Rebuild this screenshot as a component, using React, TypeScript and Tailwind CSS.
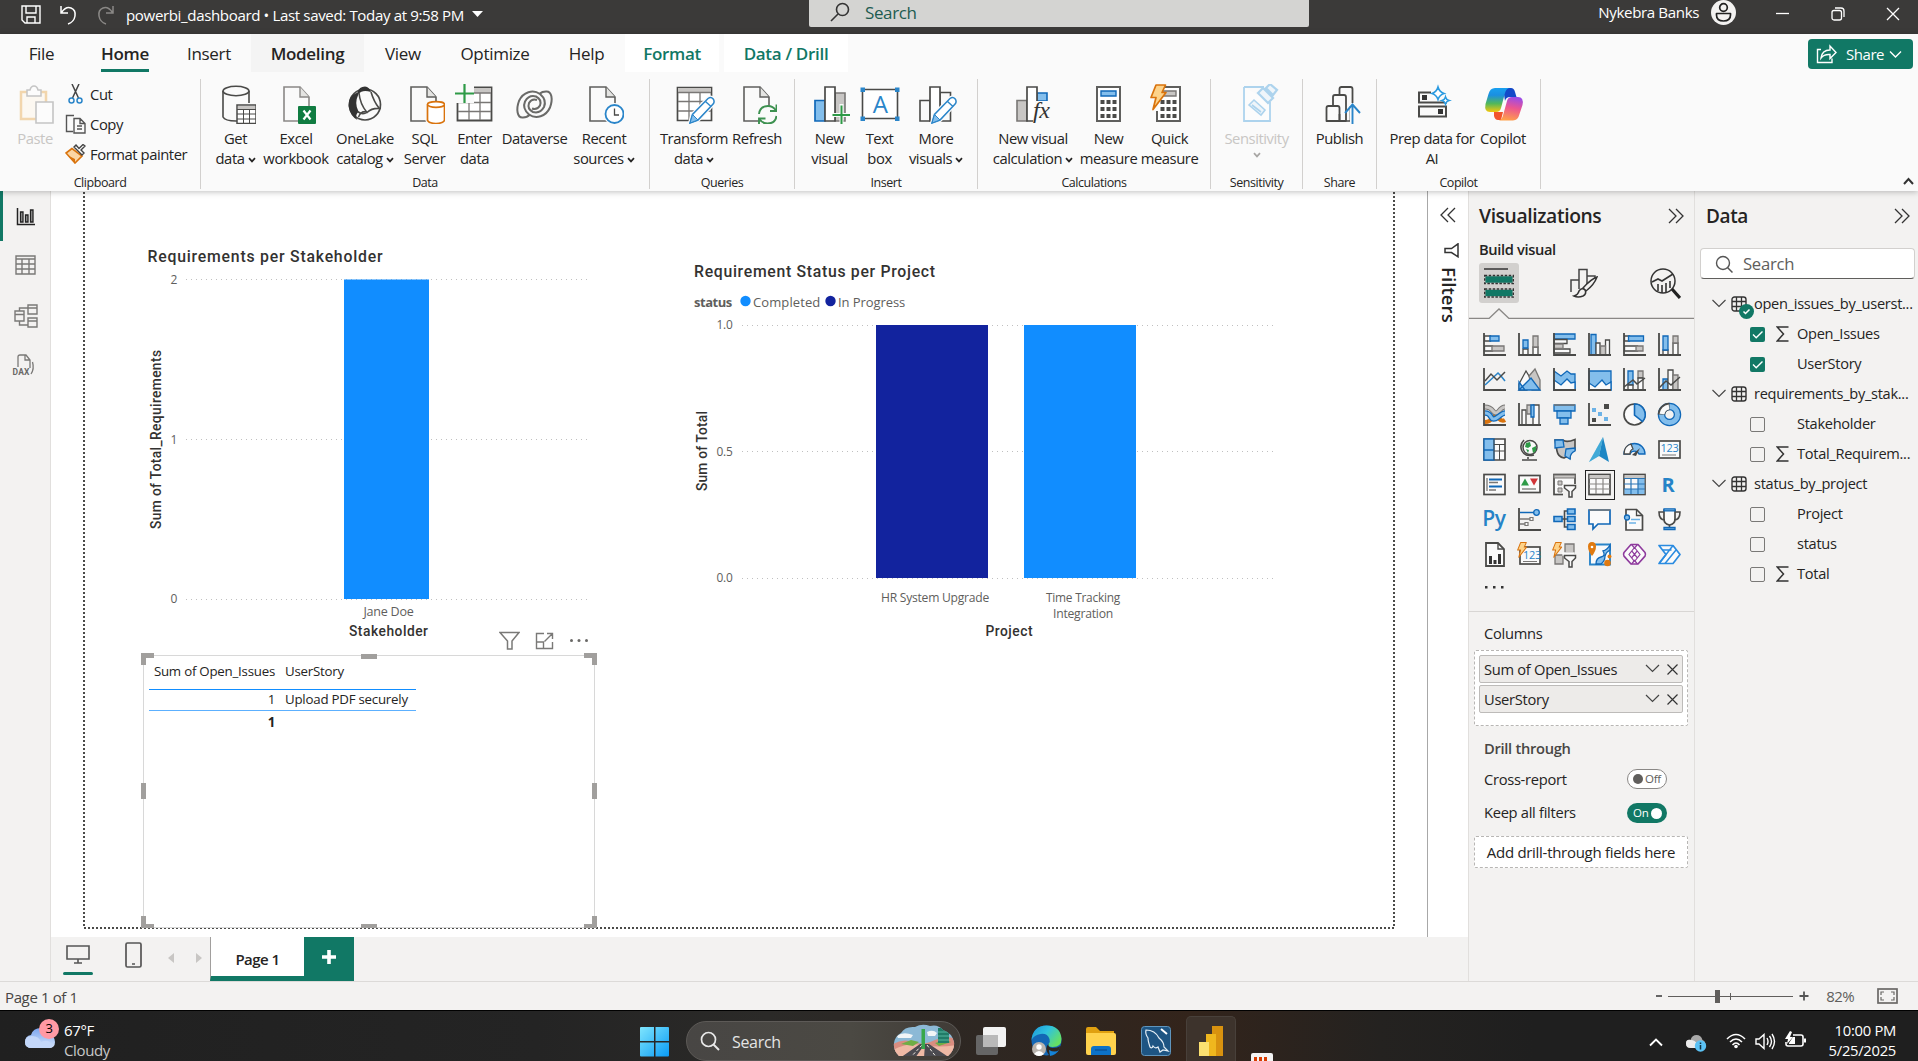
import React from 'react';

const D = '#4a4a48';
const B = '#1068b8';
const BF = '#83beec';
const G = '#797775';
const GF = '#c8c6c4';
const W = '#fafafa';

type IconProps = { children: React.ReactNode; w?: number; h?: number; className?: string };

function Svg({ children, w = 23, h = 23, className = '' }: IconProps) {
  return (
    <svg width={w} height={h} viewBox={`0 0 ${w} ${h}`} fill="none" className={`block shrink-0 ${className}`}>
      {children}
    </svg>
  );
}

const Chevron = ({ className = '' }: { className?: string }) => (
  <svg width="8" height="6" viewBox="0 0 8 6" fill="none" className={`inline-block ${className}`}>
    <path d="M1 1.2 4 4.4 7 1.2" stroke="currentColor" strokeWidth="1.7" />
  </svg>
);

/* ---------- ribbon icons (40 x 40) ---------- */

const Doc = ({ x = 6, c = '#5f5f5d' }: { x?: number; c?: string }) => (
  <g transform={`translate(${x} 0)`}>
    <path d="M1 3h16l9 10v24H1z" fill={W} stroke={c} strokeWidth="1.6" />
    <path d="M17 3v10h9" stroke={c} strokeWidth="1.4" fill="#e4e4e2" />
  </g>
);

const Pencil = ({ x, y }: { x: number; y: number }) => (
  <g transform={`translate(${x} ${y})`}>
    <path d="M1 26l2.500-8.500L19 1.500q3-2 5 .3t.3 5L9 23z" fill="#fff" stroke={W} strokeWidth="4" />
    <path d="M1 26l2.500-8.500L19 1.500q3-2 5 .3t.3 5L9 23z" fill="#fff" stroke="#2a85c9" strokeWidth="1.5" />
    <path d="M1 26l2.500-8.500L9 23z" fill={BF} stroke="#2a85c9" />
    <path d="M16.500 4.500l5.500 5" stroke="#2a85c9" strokeWidth="1.4" />
  </g>
);

const PasteI = () => (
  <Svg w={40} h={40} className="opacity-40">
    <path d="M6 8h25v27H6z" fill="#fff6e4" stroke="#e8a33d" strokeWidth="2.500" />
    <path d="M12 12V6h3q1-4 4-4t4 4h3v6z" fill="#fff" stroke="#777" strokeWidth="1.500" />
    <path d="M21 18h17v21H21z" fill="#fff" stroke="#777" strokeWidth="1.600" />
  </Svg>
);
const GetDataI = () => (
  <Svg w={40} h={40}>
    <path d="M7 7v26q2 4 13 4h2M33 7v12" stroke={D} strokeWidth="1.6" />
    <ellipse cx="20" cy="7" rx="13" ry="4.700" fill={W} stroke={D} strokeWidth="1.6" />
    <path d="M21 21h19v18.500H21z" fill="#fff" stroke={D} strokeWidth="1.5" />
    <path d="M22 22h17v3H22z" fill={GF} />
    <path d="M21 25.500h19M21 30h19M21 35h19M27.500 25v14M33.500 25v14" stroke={D} />
  </Svg>
);
const ExcelI = () => (
  <Svg w={40} h={40}>
    <Doc x={7} c="#8a8886" />
    <rect x="22" y="22" width="18" height="18" rx="1" fill="#107c41" />
    <path d="M27.500 26.500l7 9M34.500 26.500l-7 9" stroke="#fff" strokeWidth="2.200" />
  </Svg>
);
const OneLakeI = () => (
  <Svg w={40} h={40}>
    <circle cx="20" cy="20.500" r="15.500" stroke={D} strokeWidth="1.7" fill={W} />
    <path d="M20 2.500q-6 0-7.500 6Q3 12 3.500 22q1.500 10 9 14-3-4 1-8.500-4.500-8 0-17.500 4-5 12.500-2-1.500-5-6-5.500z" fill="#333" />
    <path d="M14 9q1 11 8 19.500 5-5 14-4M22 28q-4 3.500-9.500-.5M13.500 33q3-7 9-5M26 8q3 10 8 16" stroke={D} strokeWidth="1.6" />
  </Svg>
);
const SqlI = () => (
  <Svg w={40} h={40}>
    <Doc x={5} />
    <path d="M22.500 20.500v16q2 3 8.500 3t8.500-3v-16z" fill="#fff" stroke={W} strokeWidth="4" />
    <path d="M22.500 20.500v16q2 3 8.500 3t8.500-3v-16" fill="#fff" stroke="#d9730d" strokeWidth="1.700" />
    <ellipse cx="31" cy="20.500" rx="8.500" ry="2.800" fill="#fff" stroke="#d9730d" strokeWidth="1.700" />
  </Svg>
);
const EnterI = () => (
  <Svg w={40} h={40}>
    <path d="M2.500 3.500h34v33h-34z" fill="#fff" stroke={D} strokeWidth="1.8" />
    <path d="M14 4h22v5H14z" fill={GF} />
    <path d="M3 18.500h33M3 27.500h33M14 9v27M25 9v27M14 9h22" stroke={G} strokeWidth="1.300" />
    <path d="M0 0h19v19H0z" fill={W} />
    <path d="M9.500 0v19M0 9.500h19" stroke="#2e9a47" strokeWidth="2.200" />
  </Svg>
);
const DataverseI = () => (
  <Svg w={40} h={40}>
    <path d="M8 33.500C2 34 1 25 4 17 8 8 18 5 25 10q7 6 4 13-4 7-11 5-6-3-4-9 3-5 8-3" stroke="#6a6a68" strokeWidth="2" />
    <path d="M31 7.500c6-.5 7 8 4 16-4 9-14 12-21 7q-7-6-4-13 4-7 11-5 6 3 4 9-3 5-8 3" stroke="#6a6a68" strokeWidth="2" />
    <path d="M8 33.500q4 0 7-3M31 7.500q-4 0-6 2" stroke="#6a6a68" strokeWidth="2" />
  </Svg>
);
const RecentI = () => (
  <Svg w={40} h={40}>
    <Doc x={5} />
    <circle cx="30.500" cy="30" r="9" fill="#fff" stroke={W} strokeWidth="4" />
    <circle cx="30.500" cy="30" r="9" fill="#fff" stroke="#2a85c9" strokeWidth="1.800" />
    <path d="M30.500 24.500V31H35" stroke={D} strokeWidth="1.300" />
  </Svg>
);
const TransformI = () => (
  <Svg w={42} h={40}>
    <path d="M3.500 3.500h34v33h-34z" fill="#fff" stroke={D} strokeWidth="1.7" />
    <path d="M4 4h33v4H4z" fill={GF} />
    <path d="M4 8.500h33M4 17.500h33M4 27h33M15 9v27M26 9v27" stroke={G} strokeWidth="1.300" />
    <Pencil x={15} y={13} />
  </Svg>
);
const RefreshI = () => (
  <Svg w={40} h={40}>
    <Doc x={6} />
    <circle cx="30.500" cy="31" r="9.500" fill={W} />
    <path d="M22 30q1-8 9-8 5 0 8 4.500M39.500 32q-1 7.500-9 7.500-5 0-8-4.500" stroke="#3d9150" strokeWidth="1.900" />
    <path d="M39.500 20.500v6.500H33M22 40.500V34.500h6.500" stroke="#3d9150" strokeWidth="1.900" />
  </Svg>
);
const NewVisualI = () => (
  <Svg w={40} h={40}>
    <path d="M5 16.500h10V37H5z" fill={BF} stroke={B} strokeWidth="1.7" />
    <path d="M25 9h10v28H25z" fill={GF} stroke={G} strokeWidth="1.6" />
    <path d="M15 3h10v34H15z" fill="#fff" stroke={D} strokeWidth="1.7" />
    <path d="M31.500 20v20M22 31h19" stroke={W} strokeWidth="4" />
    <path d="M31.500 21.500V40M22.500 31H41" stroke="#2e9a47" strokeWidth="2" />
  </Svg>
);
const TextBoxI = () => (
  <Svg w={40} h={40}>
    <path d="M2.500 5.500h35v29h-35z" fill="#fff" stroke={D} strokeWidth="1.600" />
    <path d="M.5 3.500h4.500v4.500H.5zM35 3.500h4.500v4.500H35zM.5 32.500h4.500V37H.5zM35 32.500h4.500V37H35z" fill="#2a85c9" />
    <text x="20" y="29" textAnchor="middle" fontSize="24" fill="#2a85c9" className="font-['Open_Sans',sans-serif]">A</text>
  </Svg>
);
const MoreI = () => (
  <Svg w={42} h={40}>
    <path d="M4 16.500h10V37H4zM24 8.500h10.500V37H24z" fill={W} stroke={D} strokeWidth="1.6" />
    <path d="M14 3h10v34H14z" fill="#fff" stroke={D} strokeWidth="1.7" />
    <Pencil x={15} y={13} />
  </Svg>
);
const CalcVisI = () => (
  <Svg w={40} h={40}>
    <path d="M4 16.500h10V37H4z" fill={GF} stroke={G} strokeWidth="1.6" />
    <path d="M24 9h10v8H24z" fill={BF} stroke={B} strokeWidth="1.6" />
    <path d="M14 3h10v34H14z" fill="#fff" stroke={D} strokeWidth="1.7" />
    <path d="M22 17h14v21H20z" fill={W} />
    <text x="20" y="34" fontSize="24" fontStyle="italic" fill="#333" className="font-['Liberation_Serif',serif]">fx</text>
  </Svg>
);
const Calculator = ({ x, screen, sc }: { x: number; screen: string; sc: string }) => (
  <g transform={`translate(${x} 0)`}>
    <path d="M1 3h23v34H1z" fill="#fff" stroke="#5f5f5d" strokeWidth="2" />
    <path d="M5 7h15v5H5z" fill={screen} stroke={sc} strokeWidth="1.4" />
    {[16, 23, 30].map((y) => [4.5, 10.5, 16.5].map((cx) => <rect key={`${cx}-${y}`} x={cx} y={y} width="4" height="4" fill="#4a4a48" />))}
  </g>
);
const Bolt = ({ s = 1 }: { s?: number }) => (
  <path transform={`scale(${s})`} d="M6 1h9.500l-3.500 7.500h4L3 25.500l3-12H1z" fill="#fdd38a" stroke="#d9730d" strokeWidth="1.700" strokeLinejoin="round" />
);
const SensI = () => (
  <Svg w={42} h={40} className="opacity-40">
    <path d="M7 3h20v0M7 3v34h26V18" fill="#fff" stroke="#3b9bdc" strokeWidth="1.800" />
    <path d="M12 21l5-5 11 10-4 5zM15 21l9 7" stroke="#3b9bdc" strokeWidth="1.600" fill="#dff0fb" />
    <path d="M21 9l5-5 10 10-5 5zM29 4l4-4 7 6-4 5z" stroke="#3b9bdc" strokeWidth="2.200" fill="#dff0fb" />
  </Svg>
);
const PublishI = () => (
  <Svg w={42} h={40}>
    <path d="M6.500 37V24q0-2 2-2h9q2 0 2 2v13zM13 21v-8q0-2 2-2h9q2 0 2 2v24M19.500 10V5q0-2 2-2h9q2 0 2 2v14M6.500 37h20" stroke={D} strokeWidth="1.800" strokeLinejoin="round" />
    <path d="M19.500 30v7h11V22" stroke={D} strokeWidth="1.700" />
    <path d="M32.500 40V21" stroke={W} strokeWidth="5" />
    <path d="M32.500 40V21M25 29l7.500-8.500L40 29" stroke="#2a85c9" strokeWidth="1.900" />
  </Svg>
);
const PrepI = () => (
  <Svg w={42} h={40}>
    <path d="M19 8.500H7v10h27v-1M7 22.500h27v10H7z" stroke="#4a4a48" strokeWidth="2" />
    <path d="M10 11h5v5h-5zM26 25h5v5h-5z" fill="#333" />
    <path d="M26 3q1.500 5 6 6.500-4.500 1.500-6 6-1.500-4.500-6-6Q24.500 8 26 3zM33.500 13q.8 2.800 3.500 3.500-2.700.8-3.500 3.500-.8-2.700-3.500-3.500 2.700-.7 3.500-3.500z" fill="#fff" stroke="#2a9ae0" strokeWidth="1.600" />
  </Svg>
);
const CopilotI = () => (
  <Svg w={42} h={40}>
    <defs>
      <linearGradient id="cpA" x1="0" y1="0" x2="0" y2="1">
        <stop offset="0" stopColor="#18a0f0" /><stop offset=".3" stopColor="#1b8fe0" /><stop offset=".65" stopColor="#52b85a" /><stop offset="1" stopColor="#f6c80c" />
      </linearGradient>
      <linearGradient id="cpB" x1=".6" y1="0" x2=".4" y2="1">
        <stop offset="0" stopColor="#9b4be8" /><stop offset=".45" stopColor="#ec5590" /><stop offset="1" stopColor="#ffa04a" />
      </linearGradient>
    </defs>
    <path d="M20 4h8q3 0 4 4l1.500 5H27q-4 0-5 4z" fill="#1349c8" />
    <path d="M11 28h9l-2 8h-3q-3 0-4-4z" fill="#f2552c" />
    <path d="M12 4h14q-3 1-4 5l-4 15q-1 4-5 4H7q-6 0-4.500-8l3-10Q7 4 12 4z" fill="url(#cpA)" />
    <path d="M30 36.500H16q3-1 4-5l4-14.500q1-4 5-4h6q6 0 4.500 8l-3 9Q35 36.500 30 36.500z" fill="url(#cpB)" />
  </Svg>
);

/* ---------- visual gallery icons (23 x 23) ---------- */

const Axes = () => <path d="M1 0v22h22" stroke={D} strokeWidth="1.8" />;
const p = (d: string, fill: string, stroke: string, key?: number, sw = 1.3) => <path key={key} d={d} fill={fill} stroke={stroke} strokeWidth={sw} />;

const gallery: React.ReactNode[] = [
  <>{p('M1.500 3h6v5h-6zM1.500 13h8v5h-8z', W, D)}{p('M7 3h9v5H7z', BF, B)}{p('M9 13h12v5H9z', GF, G)}<Axes /></>,
  <>{p('M5 16h5v6H5zM15 14h5v8h-5z', W, D)}{p('M5 7h5v8H5z', BF, B)}{p('M15 3h5v11h-5z', GF, G)}<Axes /></>,
  <>{p('M1 1h21v5H1z', BF, B)}{p('M1 6.500h13v4H1zM1 16h16v4H1z', W, D)}{p('M1 11h9v4.500H1z', GF, G)}<Axes /></>,
  <>{p('M3 1.500h5V22H3z', BF, B)}{p('M8 10h4v12H8zM17.500 7h4v15h-4z', W, D)}{p('M12.500 13h5v9h-5z', GF, G)}<Axes /></>,
  <>{p('M1.500 3h5v5h-5zM1.500 13h13v5h-13z', W, D)}{p('M5.500 3h15v5h-15z', BF, B)}{p('M13 13h7v5h-7z', GF, G)}<Axes /></>,
  <>{p('M5 17h5v5H5zM15 10h5v12h-5z', W, D)}{p('M5 3h5v14H5z', BF, B)}{p('M15 3h5v7h-5z', GF, G)}<Axes /></>,
  <><Axes /><path d="M2 17l13-12 3 3 4 5" stroke="#2a85c9" strokeWidth="1.600" /><path d="M2 13l6-7 6 6 8-8" stroke={D} strokeWidth="1.500" /></>,
  <>{p('M1 16l7-13 6 10-5 9H1z', W, D)}{p('M11 8l6-7 5 11v10h-8z', GF, G)}{p('M1 14l6 8H1zM1 22l12-12 9 12z', BF, B)}</>,
  <>{p('M1 3l7 5 6-5 4 3h4v16H1z', BF, B)}{p('M1 12l7 5 6-6 4 4 4-1v8H1z', W, B)}<Axes /></>,
  <>{p('M1 3h22v19H1z', BF, B)}{p('M1 15l6 4 7-7 4 5 5-3v8H1z', W, B)}<Axes /></>,
  <>{p('M5 3h5v14H5z', BF, B)}{p('M15 3h5v7h-5z', GF, G)}{p('M5 17h5v5H5zM15 10h5v12h-5z', W, D)}<Axes /><path d="M1 19l9-7 4 4 8-6" stroke={D} strokeWidth="1.500" /></>,
  <>{p('M5 11h5v11H5z', BF, B)}{p('M10 2h5v20h-5z', W, D)}{p('M15 7h5v15h-5z', GF, G)}<Axes /><path d="M1 20l7-7 5 4 9-8" stroke={D} strokeWidth="1.500" /></>,
  <><path d="M2 19q5 0 7-4t6 0 7 2" stroke="#d9730d" strokeWidth="4" /><path d="M2 4q5 0 8 4t6 0 6-4" stroke={G} strokeWidth="5" /><path d="M2 4q5 0 8 4t6 0 6-4" stroke={GF} strokeWidth="3" /><path d="M2 10q4 0 6 4t7 0 7-4" stroke={B} strokeWidth="5.500" /><path d="M2 10q4 0 6 4t7 0 7-4" stroke={BF} strokeWidth="3" /><Axes /></>,
  <>{p('M4 7h4v15H4zM15 2h6v20h-6z', W, D)}{p('M9 2h4v9H9z', GF, G)}{p('M13 2h3v12h-3z', BF, B)}<Axes /></>,
  <>{p('M1 2h21v6H1z', BF, B)}{p('M4 8h14v7H4z', BF, B)}{p('M7 15h8v6H7z', BF, B)}<path d="M1 2h21" stroke={G} strokeWidth="1.500" /></>,
  <><Axes /><path d="M16 1h5v5h-5zM4 15h4v4H4z" fill={D} /><path d="M4 5h4v4H4zM10 9h4v4h-4zM16 14h4v4h-4z" fill="#6cb2e6" /></>,
  <><circle cx="11.500" cy="11.500" r="10.500" fill={W} stroke={D} strokeWidth="1.700" />{p('M11.500 1a10.500 10.500 0 0 1 8 17.500l-8-6.500z', BF, B, 0, 1.6)}</>,
  <><circle cx="11.500" cy="11.500" r="8" stroke={B} strokeWidth="7.500" /><circle cx="11.500" cy="11.500" r="8" stroke={BF} strokeWidth="5" /><path d="M3.500 11.500a8 8 0 0 1 8-8" stroke={D} strokeWidth="7.500" /><path d="M4 11a8 8 0 0 1 7-7" stroke={W} strokeWidth="5" /></>,
  <>{p('M1 1h21v21H1z', W, D, 0, 1.7)}{p('M1 1h10v11H1zM1 12h10v10H1z', BF, B, 1)}<path d="M11 1v21M11 6.500h11M11 13h11M16.500 6.500V22" stroke={D} /></>,
  <><circle cx="12" cy="9.500" r="7" fill={W} stroke={D} strokeWidth="1.500" /><path d="M8 5l4-1 1 4-3 2-3-1zM14 10l4-2v5l-3 2zM8 11l3 1-1 3z" fill="#2e9a47" /><path d="M6 2Q1 7 4 13t12 4M10 19v2M4 22h15" stroke={D} strokeWidth="1.600" /></>,
  <>{p('M2 2h8q3 3 12-.5L22 12q-5 2-5 8-3-2-6 0-6-1-7-7z', GF, D, 0, 1.6)}{p('M2 2h8l1 7-9 1z', BF, B)}{p('M13 11l9-1v3q-5 2-5 8l-5-3z', BF, B)}</>,
  <><path d="M15-1 1 24l10-6z" fill="#6fc8e8" /><path d="M15-1l6 25-10-6z" fill="#1d87c4" /><path d="M15-1 1 24l10-6z" fill="#2d9cd0" opacity=".7" /></>,
  <>{p('M1 16a10.500 10.500 0 0 1 21 0h-6a5 5 0 0 0-9 0z', BF, B)}{p('M1 16Q1 8 8 6l2 5q-3 1-3 5z', W, D)}<path d="M9 17l8-7-4 8z" fill={D} /></>,
  <><rect x="1" y="3" width="21" height="17" fill={W} stroke={D} strokeWidth="1.700" /><text x="11.500" y="14" textAnchor="middle" fontSize="11" fill="#2a85c9" className="font-['Open_Sans',sans-serif]">123</text><path d="M4 17h14" stroke={G} /></>,
  <><rect x="1" y="1.500" width="21" height="20" fill={W} stroke={D} strokeWidth="1.700" /><path d="M4 5v13M6 9.500h9M6 17h7" stroke={G} strokeWidth="1.300" /><path d="M6 6.500h13M6 13.500h13" stroke="#1068b8" strokeWidth="2" /></>,
  <><rect x="1" y="2.500" width="21" height="17" fill={W} stroke={D} strokeWidth="1.700" /><path d="M3 12.500l4-7 4 7z" fill="#2e9a47" /><path d="M12 5.500h8l-4 7z" fill="#d13438" /><path d="M4 16h14" stroke={G} strokeWidth="1.300" /></>,
  <><rect x="1" y="1.500" width="21" height="20" fill={W} stroke={D} strokeWidth="1.700" /><path d="M1 2h21v3H1z" fill={GF} stroke={G} /><path d="M5 8h4v4H5zM5 15h4v4H5z" fill={GF} stroke={G} /><path d="M10 11h14v13H10z" fill="#f3f2f1" /><path d="M11.500 12.500h11v2.500L19 18.500V24h-3v-5.500L11.500 15z" fill={W} stroke={D} strokeWidth="1.500" /></>,
  <><rect x="1" y="1.500" width="21" height="20" fill={W} stroke={D} strokeWidth="1.700" /><path d="M1.500 2h20v3h-20z" fill={GF} /><path d="M1 5.500h21M1 11h21M1 16h21M8 5v16M15 5v16" stroke="#8a8886" strokeWidth="1.200" /></>,
  <><rect x="1" y="1.500" width="21" height="20" fill={W} stroke={D} strokeWidth="1.700" /><path d="M1.500 2h20v3h-20z" fill={GF} /><path d="M15 5.500h6.500V21H1.500v-5H15z" fill={BF} /><path d="M1 5.500h21M1 11h21M1 16h21M8 5v16M15 5v16" stroke="#2a75b5" strokeWidth="1.200" /></>,
  <text x="10" y="19" textAnchor="middle" fontSize="20" fontWeight="700" fill="#2583c7" className="font-['Open_Sans',sans-serif]">R</text>,
  <text x="11" y="17.500" textAnchor="middle" fontSize="21" fontWeight="600" fill="#2583c7" className="font-['Open_Sans',sans-serif]">Py</text>,
  <><Axes /><path d="M2 4.500h14" stroke={B} strokeWidth="1.500" /><circle cx="18.500" cy="4.500" r="2.800" fill={BF} stroke={B} strokeWidth="1.300" /><path d="M2 11h10M2 16h5" stroke={G} strokeWidth="1.300" /><path d="M12 9.500h3v3h-3zM7 14.500h3v3H7z" fill={W} stroke={G} strokeWidth="1.200" /></>,
  <><path d="M8 11h6M14 3h-2.500v16H14" stroke={D} strokeWidth="1.600" />{p('M1 8.500h8v5H1zM14.500 1h7.500v5h-7.500zM14.500 8.500h7.500v5h-7.500zM14.500 16.500h7.500v5h-7.500z', BF, B, 0, 1.6)}</>,
  <>{p('M1 2h21v14H10l-5 5v-5H1z', W, B, 0, 1.7)}<path d="M1 2h21" stroke={G} strokeWidth="1.500" /></>,
  <><path d="M3 1.500h10.500l6 6V22H3z" fill={W} stroke={D} strokeWidth="1.700" /><path d="M13.500 1.500v6h6" stroke={D} strokeWidth="1.300" /><circle cx="4" cy="9.500" r="2.500" fill={BF} stroke={B} strokeWidth="1.300" /><path d="M8 11.500h9M6 15h7" stroke="#6cb2e6" strokeWidth="1.300" /></>,
  <>{p('M6 2h11v9q0 5-5.500 6Q6 16 6 11z', W, D, 0, 1.7)}<path d="M6 4H1q0 8 6 8M17 4h5q0 8-6 8M11.500 17v3" stroke={D} strokeWidth="1.600" />{p('M6 .8h11v2H6zM6 19.500h11v2H6z', BF, B, 1)}</>,
  <><path d="M3 0h12l6 6v17H3z" fill={W} stroke={D} strokeWidth="1.800" /><path d="M15 0v6h6" stroke={D} strokeWidth="1.400" /><path d="M6 13h3v8H6zM10.500 17h3v4h-3zM15 11h3v10h-3z" fill="#333" /></>,
  <><rect x="2" y="4" width="20" height="17" fill={W} stroke={D} strokeWidth="1.700" /><text x="14" y="16" textAnchor="middle" fontSize="11" fill="#2a85c9" className="font-['Open_Sans',sans-serif]">123</text><path d="M5 18.500h14" stroke={G} /><g transform="translate(-1 -1)"><Bolt s={0.6} /></g></>,
  <>{p('M12 1h9v9h-9zM2 12h8v9H2z', GF, G)}{p('M10 10h11v2H10z', W, W)}<path d="M11.500 12.500h11v2.500L19 18.500V24h-3v-5.500L11.500 15z" fill={W} stroke={D} strokeWidth="1.500" /><g transform="translate(-1 -1)"><Bolt s={0.6} /></g></>,
  <><path d="M2 1.500h20v20H2z" fill={W} stroke="#2a85c9" strokeWidth="1.900" /><path d="M8 21q0-6 5-7t2-6q4-1 7-6v5q-4 2-5 6 0 5-4 8z" fill={BF} stroke={B} strokeWidth="1.300" /><path d="M4-1q4 0 4 4.500T4 13Q0 8 0 3.500T4-1z" fill="#e07a10" /><circle cx="4" cy="4" r="1.300" fill="#fff" /><circle cx="19.500" cy="20" r="3.300" fill="#e07a10" /><circle cx="21.500" cy="13.500" r="2" fill="#e07a10" /></>,
  <><path d="M8 1.500L1 9.500q-1 1.800 0 3.600L8 21h7l7-7.900q1-1.800 0-3.600l-7-8z" fill={W} stroke="#8e3a9d" strokeWidth="1.600" strokeLinejoin="round" /><path d="M11.500 4.500l-5.500 7 5.500 7M11.500 4.500l5.500 7-5.500 7M8.500 1.500L11.500 5l3-3.500M8.500 21l3-3.500 3 3.500M8.700 7.800l5.800 7.200M14.300 7.800L8.500 15" stroke="#8e3a9d" strokeWidth="1.200" /></>,
  <><path d="M1 2.500h14l7 9-7 9H1l7-9z" fill={W} stroke="#2a8be0" strokeWidth="1.700" strokeLinejoin="round" /><path d="M15 2.500L1.500 20M18 7L7 20.500M4.500 7h9" stroke="#2a8be0" strokeWidth="1.500" /></>,
];

/* ---------- ribbon ---------- */

type Btn = { w: string; icon: React.ReactNode; a: string; b?: string; chev?: boolean; dim?: boolean };

const RibbonButton = ({ w, icon, a, b, chev, dim }: Btn) => (
  <div className={`flex shrink-0 flex-col items-center whitespace-nowrap leading-5 ${w} ${dim ? 'text-[#c8c6c4]' : ''}`}>
    <div className="flex h-10 w-10 justify-start">{icon}</div>
    <div className="mt-1">{a}</div>
    <div className="flex items-center gap-[3px]">
      {b}
      {chev && <Chevron className={dim ? 'mt-1 text-[#a8a6a4]' : 'mt-1'} />}
    </div>
  </div>
);

const groups: { name: string; box: string; pad: string; items: Btn[] }[] = [
  {
    name: 'Data', box: 'w-[449px]', pad: 'pl-[5px]',
    items: [
      { w: 'w-[59px]', icon: <GetDataI />, a: 'Get', b: 'data', chev: true },
      { w: 'w-[62px]', icon: <ExcelI />, a: 'Excel', b: 'workbook' },
      { w: 'w-[76px]', icon: <OneLakeI />, a: 'OneLake', b: 'catalog', chev: true },
      { w: 'w-[43px]', icon: <SqlI />, a: 'SQL', b: 'Server' },
      { w: 'w-[57px]', icon: <EnterI />, a: 'Enter', b: 'data' },
      { w: 'w-[63px]', icon: <DataverseI />, a: 'Dataverse' },
      { w: 'w-[76px]', icon: <RecentI />, a: 'Recent', b: 'sources', chev: true },
    ],
  },
  {
    name: 'Queries', box: 'w-[145px]', pad: 'pl-[7px]',
    items: [
      { w: 'w-[74px]', icon: <TransformI />, a: 'Transform', b: 'data', chev: true },
      { w: 'w-[52px]', icon: <RefreshI />, a: 'Refresh' },
    ],
  },
  {
    name: 'Insert', box: 'w-[183px]', pad: 'pl-[10px]',
    items: [
      { w: 'w-[49px]', icon: <NewVisualI />, a: 'New', b: 'visual' },
      { w: 'w-[51px]', icon: <TextBoxI />, a: 'Text', b: 'box' },
      { w: 'w-[62px]', icon: <MoreI />, a: 'More', b: 'visuals', chev: true },
    ],
  },
  {
    name: 'Calculations', box: 'w-[233px]', pad: 'pl-[7px]',
    items: [
      { w: 'w-[96px]', icon: <CalcVisI />, a: 'New visual', b: 'calculation', chev: true },
      { w: 'w-[55px]', icon: <Svg w={40} h={40}><Calculator x={7} screen={BF} sc={B} /></Svg>, a: 'New', b: 'measure' },
      { w: 'w-[67px]', icon: <Svg w={40} h={40}><Calculator x={6} screen={GF} sc={G} /><path d="M0 0h10l-2 27H0z" fill={W} /><Bolt /></Svg>, a: 'Quick', b: 'measure' },
    ],
  },
  { name: 'Sensitivity', box: 'w-[92px]', pad: 'pl-0', items: [{ w: 'w-[91px]', icon: <SensI />, a: 'Sensitivity', chev: true, dim: true }] },
  { name: 'Share', box: 'w-[74px]', pad: 'pl-0', items: [{ w: 'w-[73px]', icon: <PublishI />, a: 'Publish' }] },
  {
    name: 'Copilot', box: 'w-[164px]', pad: 'pl-[11px]',
    items: [
      { w: 'w-[88px]', icon: <PrepI />, a: 'Prep data for', b: 'AI' },
      { w: 'w-[54px]', icon: <CopilotI />, a: 'Copilot' },
    ],
  },
];

const Ribbon = () => (
  <div className="flex h-[119px] pt-[7px] text-[14.800px] tracking-[-0.030em] text-[#252423]">
    <div className="flex h-[110px] w-[201px] shrink-0 flex-col border-r border-[#d2d0ce]">
      <div className="flex h-[97px] pt-[5px]">
        <div className="ml-[15px] flex w-10 flex-col items-center leading-5 text-[#c8c6c4]">
          <PasteI />
          <div className="mt-1">Paste</div>
        </div>
        <div className="ml-[10px] flex flex-col">
          <div className="flex h-[20px] items-center gap-[4px]">
            <Svg w={21} h={20}>
              <path d="M7 0l6.500 14M14 0L7.500 14" stroke="#444" strokeWidth="1.500" />
              <circle cx="6.500" cy="16.500" r="2.500" stroke="#2a85c9" strokeWidth="1.500" /><circle cx="14.500" cy="16.500" r="2.500" stroke="#2a85c9" strokeWidth="1.500" />
            </Svg>
            Cut
          </div>
          <div className="mt-[10px] flex h-[20px] items-center gap-[4px]">
            <Svg w={21} h={20}>
              <path d="M9 1.500H1.500v16H8M9 4.500h6l5 5V19H9zM15 4.500v5h5M12 12h5M12 15h5" stroke="#555" strokeWidth="1.400" />
            </Svg>
            Copy
          </div>
          <div className="mt-[10px] flex h-[20px] items-center gap-[4px]">
            <Svg w={21} h={20}>
              <path d="M7 4.500L1 9l9 10 7-7z" fill="#fbd6a5" stroke="#d9730d" strokeWidth="1.600" />
              <path d="M4 12l6 3v4z" fill="#d9730d" /><path d="M9 3l8 8 2-2-3-3 4-4-2-1.500-4 4L11 1z" fill="#fff" stroke="#444" strokeWidth="1.400" />
            </Svg>
            Format painter
          </div>
        </div>
      </div>
      <div className="text-center text-[12.500px] leading-[13px]">Clipboard</div>
    </div>
    {groups.map((g) => (
      <div key={g.name} className={`flex h-[110px] shrink-0 flex-col border-r border-[#d2d0ce] ${g.box}`}>
        <div className={`flex h-[97px] pt-[5px] ${g.pad}`}>{g.items.map((it) => <RibbonButton key={it.a} {...it} />)}</div>
        <div className="text-center text-[12.500px] leading-[13px]">{g.name}</div>
      </div>
    ))}
    <div className="flex flex-1 items-end justify-end pr-[4px] pb-[5px]">
      <Svg w={11} h={9}><path d="M1 7l4.500-5L10 7" stroke="#333" strokeWidth="2" /></Svg>
    </div>
  </div>
);

const tabs = [
  { t: 'File', c: 'w-[83px]' },
  { t: 'Home', c: 'w-[84px] font-semibold', u: true },
  { t: 'Insert', c: 'w-[84px]' },
  { t: 'Modeling', c: 'w-[113px] font-semibold bg-[#f4f4f4]' },
  { t: 'View', c: 'w-[78px]' },
  { t: 'Optimize', c: 'w-[106px]' },
  { t: 'Help', c: 'w-[77px]' },
  { t: 'Format', c: 'w-[94px] font-semibold bg-white text-[#117865]' },
  { t: 'Data / Drill', c: 'ml-[5px] w-[124px] font-semibold bg-white text-[#117865]' },
];

const TitleBar = () => (
  <div className="flex h-[34px] items-start bg-[#3b3a39] text-[15.100px] tracking-[-0.025em] text-white">
    <div className="flex w-[809px] items-center pt-[1px]">
      <Svg w={20} h={21} className="ml-[21px]">
        <path d="M1 2h18v17H4l-3-3zM5 2v7h10V2M6 19v-6h8v6" stroke="#fff" strokeWidth="1.400" />
      </Svg>
      <Svg w={17} h={21} className="ml-[19px]"><path d="M1 2v7h7M1.500 8.500Q6 2 11 4t4 8-7 8" stroke="#fff" strokeWidth="1.500" /></Svg>
      <Svg w={17} h={21} className="ml-[20px]"><path d="M16 2v7H9M15.500 8.500Q11 2 6 4T2 12t7 8" stroke="#8a8886" strokeWidth="1.500" /></Svg>
      <div className="ml-[12px] flex h-[26px] items-center whitespace-nowrap pt-[2px]">powerbi_dashboard&nbsp;•&nbsp;Last saved: Today at 9:58 PM</div>
      <Svg w={11} h={7} className="ml-[8px]"><path d="M0 0h11L5.500 6z" fill="#fff" /></Svg>
    </div>
    <div className="flex h-[27px] w-[500px] items-center rounded-b-[2px] bg-[#d4d4d2] pb-[2px] text-[17px] text-[#1d5c50]">
      <Svg w={20} h={20} className="ml-[21px] -mt-[1px]"><circle cx="12.500" cy="7.500" r="6" stroke="#333" strokeWidth="1.600" /><path d="M8 12l-7 7" stroke="#333" strokeWidth="1.600" /></Svg>
      <span className="ml-[15px]">Search</span>
    </div>
    <div className="flex h-[25px] flex-1 items-center justify-end whitespace-nowrap">
      <span>Nykebra Banks</span>
      <Svg w={25} h={25} className="ml-[12px]">
        <circle cx="12.500" cy="12.500" r="12.500" fill="#f3f2f1" />
        <circle cx="12.500" cy="7.500" r="3.800" stroke="#222" strokeWidth="1.700" />
        <path d="M5.500 13.500h14v1.500q0 6-7 6t-7-6z" stroke="#222" strokeWidth="1.700" strokeLinejoin="round" />
      </Svg>
      <Svg w={13} h={13} className="ml-[40px] mt-[1px]"><path d="M0 6.500h13" stroke="#fff" strokeWidth="1.300" /></Svg>
      <Svg w={14} h={14} className="ml-[42px] mt-[3px]"><rect x="1" y="3.500" width="9.500" height="9.500" rx="2" stroke="#fff" strokeWidth="1.300" /><path d="M4 1h6q3 0 3 3v6" stroke="#fff" strokeWidth="1.300" /></Svg>
      <Svg w={14} h={14} className="ml-[41px] mr-[18px] mt-[3px]"><path d="M1 1l12 12M13 1L1 13" stroke="#fff" strokeWidth="1.300" /></Svg>
    </div>
  </div>
);

const TabRow = () => (
  <div className="flex h-[38px] text-[17px] tracking-[-0.018em] text-[#252423]">
    {tabs.map((x) => (
      <div key={x.t} className={`flex shrink-0 flex-col items-center ${x.c}`}>
        <div className="flex flex-1 flex-col whitespace-nowrap">
          <div className="flex h-[35px] items-center pt-[4px]">{x.t}</div>
          {x.u && <div className="h-[3px] bg-[#117865]" />}
        </div>
      </div>
    ))}
    <div className="flex-1" />
    <div className="mr-[5px] mt-[5px] flex h-[30px] w-[105px] items-center rounded-[4px] bg-[#117865] pl-[8px] text-[15px] tracking-[-0.03em] text-white">
      <Svg w={21} h={20}><path d="M5 5.500H1.500v13H16v-4M5 14q1-8 9-8V2l6 6.500-6 6v-4q-6-.5-9 3.500z" stroke="#fff" strokeWidth="1.400" /></Svg>
      <span className="ml-[9px]">Share</span>
      <Svg w={13} h={9} className="ml-[5px]"><path d="M1 1.500l5.500 5.500L12 1.500" stroke="#fff" strokeWidth="1.400" /></Svg>
    </div>
  </div>
);

/* ---------- canvas ---------- */

const NavRail = () => (
  <div className="flex w-[51px] shrink-0 flex-col border-r border-[#e1dfdd] bg-[#f3f2f1]">
    <div className="flex h-[50px] items-center border-l-[3px] border-[#117865] pl-[13px]">
      <Svg w={19} h={19}><path d="M1.500 1v16.500H19" stroke="#222" strokeWidth="1.500" /><path d="M4.500 5h2.500v10H4.500zM9.500 8H12v7H9.500zM14.500 3H17v12h-2.500z" fill="#999" stroke="#222" strokeWidth="1.300" /></Svg>
    </div>
    <div className="flex h-[50px] items-center pl-[15px] pb-[2px]">
      <Svg w={21} h={20}><path d="M1 1h19v18H1zM1 4h19M1 9h19M1 14h19M7 4v15M14 4v15" stroke="#7a7977" strokeWidth="1.400" /></Svg>
    </div>
    <div className="flex h-[50px] items-center pl-[14px] pb-[1px]">
      <Svg w={24} h={24}><path d="M1 7h9v10H1zM1 10.500h9M14 1h9v9h-9zM14 4h9M14 14h9v9h-9zM14 17h9M5.500 7V4H14M5.500 17v4H14" stroke="#7a7977" strokeWidth="1.400" /></Svg>
    </div>
    <div className="flex h-[50px] items-center pl-[12px] pb-[2px]">
      <Svg w={24} h={22}>
        <path d="M6 13V3q0-2 2-2h6l4 5v8M13 1v5h5M20.500 8q2 7-1.500 12" stroke="#7a7977" strokeWidth="1.300" />
        <text x="0.500" y="20.500" fontSize="8.500" fontWeight="700" fill="#6a6967" textLength="17" className="font-['Roboto',sans-serif]">DAX</text>
      </Svg>
    </div>
  </div>
);

const title = "font-['Roboto',sans-serif] font-medium";
const axis = "font-['Open_Sans',sans-serif] tracking-[-0.02em]";
const grid = { stroke: '#c0c0c0', strokeWidth: 1, strokeDasharray: '1 4' };

const StakeholderChart = () => (
  <svg width="460" height="410" viewBox="140 240 460 410" className="absolute left-[89px] top-[49px]">
    <text x="147.500" y="261.500" fontSize="15.800" fill="#333231" textLength="235" className={title}>Requirements per Stakeholder</text>
    {[279.500, 439.500, 599.500].map((y) => <line key={y} x1="186" x2="587" y1={y} y2={y} {...grid} />)}
    <rect x="344" y="279.500" width="85" height="319.500" fill="#118dff" />
    {['2', '1', '0'].map((t, i) => <text key={t} x="177" y={284 + i * 159.7} textAnchor="end" fontSize="12" fill="#605e5c" className={axis}>{t}</text>)}
    <text x="388.500" y="616" textAnchor="middle" fontSize="12" fill="#605e5c" textLength="50" lengthAdjust="spacingAndGlyphs" className={axis}>Jane Doe</text>
    <text x="388.500" y="635.500" textAnchor="middle" fontSize="13.800" fill="#333231" textLength="79" className={title}>Stakeholder</text>
    <text transform="translate(161 529) rotate(-90)" fontSize="13.800" fill="#333231" textLength="179" className={title}>Sum of Total_Requirements</text>
  </svg>
);

const StatusChart = () => (
  <svg width="610" height="400" viewBox="680 250 610 400" className="absolute left-[629px] top-[59px]">
    <text x="694" y="276.500" fontSize="15.800" fill="#333231" textLength="241" className={title}>Requirement Status per Project</text>
    <text x="694" y="307" fontSize="13" fontWeight="700" fill="#605e5c" textLength="38" className={axis}>status</text>
    <circle cx="745.500" cy="301" r="5.200" fill="#118dff" />
    <text x="753" y="307" fontSize="13" fill="#605e5c" textLength="67" className={axis}>Completed</text>
    <circle cx="830.500" cy="301" r="5.200" fill="#12239e" />
    <text x="838" y="307" fontSize="13" fill="#605e5c" textLength="67" className={axis}>In Progress</text>
    {[325.500, 451.500, 578.500].map((y) => <line key={y} x1="742" x2="1276" y1={y} y2={y} {...grid} />)}
    <rect x="876" y="325" width="112" height="253" fill="#12239e" />
    <rect x="1024" y="325" width="112" height="253" fill="#118dff" />
    {['1.0', '0.5', '0.0'].map((t, i) => <text key={t} x="732.500" y={329 + i * 126.500} textAnchor="end" fontSize="12" fill="#605e5c" textLength="16" lengthAdjust="spacingAndGlyphs" className={axis}>{t}</text>)}
    <text x="935" y="602" textAnchor="middle" fontSize="12" fill="#605e5c" textLength="108" lengthAdjust="spacingAndGlyphs" className={axis}>HR System Upgrade</text>
    <text x="1083" y="602" textAnchor="middle" fontSize="12" fill="#605e5c" textLength="74" lengthAdjust="spacingAndGlyphs" className={axis}>Time Tracking</text>
    <text x="1083" y="618" textAnchor="middle" fontSize="12" fill="#605e5c" textLength="60" lengthAdjust="spacingAndGlyphs" className={axis}>Integration</text>
    <text x="1009" y="635.500" textAnchor="middle" fontSize="13.800" fill="#333231" textLength="47" className={title}>Project</text>
    <text transform="translate(707 491) rotate(-90)" fontSize="13.800" fill="#333231" textLength="80" className={title}>Sum of Total</text>
  </svg>
);

const handle = 'absolute bg-[#a19f9d]';
const corner = 'absolute h-[12px] w-[13px] border-[#a19f9d]';

const TableVisual = () => (
  <div className="absolute left-[92px] top-[464px] h-[273px] w-[452px] border border-[#d8d8d8] text-[13.300px] tracking-[-0.018em] text-[#252423]">
    <div className="absolute right-0 bottom-full mb-[6px] flex items-center gap-[15px] pr-[5px]">
      <Svg w={21} h={19}><path d="M1 1.500h19l-7 8.500v8h-4.500v-8z" stroke="#7a7977" strokeWidth="1.500" /></Svg>
      <Svg w={19} h={18}><path d="M9 1.500H1.500v15h16V10M1.500 10h7v6.500M12 1.500h5.500V7M17.500 1.500l-8 8" stroke="#7a7977" strokeWidth="1.400" /></Svg>
      <Svg w={20} h={5}><circle cx="2.500" cy="2.500" r="1.500" fill="#6a6967" /><circle cx="10" cy="2.500" r="1.500" fill="#6a6967" /><circle cx="17.500" cy="2.500" r="1.500" fill="#6a6967" /></Svg>
    </div>
    <div className="ml-[5px] w-[267px] whitespace-nowrap">
      <div className="flex h-[34px] items-center border-b border-[#118dff] pb-0.5">
        <div className="w-[132px] pr-[6px] text-right">Sum of Open_Issues</div>
        <div className="pl-[4px]">UserStory</div>
      </div>
      <div className="flex h-[21px] items-center border-b-[1.500px] border-[#5cb0ff]">
        <div className="w-[132px] pr-[6px] text-right">1</div>
        <div className="pl-[4px]">Upload PDF securely</div>
      </div>
      <div className="flex h-[23px] w-[132px] items-center justify-end pr-[6px] font-bold">1</div>
    </div>
    <div className={`${corner} -left-[3px] -top-[3px] border-l-[5px] border-t-[5px]`} />
    <div className={`${corner} -right-[3px] -top-[3px] border-r-[5px] border-t-[5px]`} />
    <div className={`${corner} -bottom-[1px] -left-[3px] border-b-[4px] border-l-[5px]`} />
    <div className={`${corner} -bottom-[1px] -right-[3px] border-b-[4px] border-r-[5px]`} />
    <div className={`${handle} -top-[2px] left-[217px] h-[5px] w-[16px]`} />
    <div className={`${handle} -bottom-[1px] left-[217px] h-[4px] w-[16px]`} />
    <div className={`${handle} -left-[3px] top-[127px] h-[16px] w-[5px]`} />
    <div className={`${handle} -right-[3px] top-[127px] h-[16px] w-[5px]`} />
  </div>
);

const Dots = () => (
  <svg width="1344" height="739" viewBox="0 0 1344 739" fill="none" className="absolute left-0 top-0">
    <path d="M33 1v736M1343 1v736M33 737h1310" stroke="#4a4a48" strokeWidth="2" strokeDasharray="2 2" />
  </svg>
);

const PageTabs = () => (
  <div className="flex h-[44px] bg-[#f3f2f1]">
    <div className="ml-[12px] flex w-[30px] flex-col items-center pt-[8px]">
      <Svg w={24} h={19}><path d="M1 1h22v13H1zM12 14v3.500M8 18h8" stroke="#555" strokeWidth="1.600" /></Svg>
      <div className="mt-[8px] h-[3px] w-[30px] rounded bg-[#117865]" />
    </div>
    <Svg w={17} h={27} className="ml-[32px] mt-[5px]"><rect x="1" y="1" width="15" height="24" rx="1.500" stroke="#555" strokeWidth="1.700" /><path d="M7 22h3" stroke="#555" strokeWidth="1.500" /></Svg>
    <Svg w={6} h={10} className="ml-[26px] mt-[16px]"><path d="M6 0v10L0 5z" fill="#c8c6c4" /></Svg>
    <Svg w={6} h={10} className="ml-[22px] mt-[16px]"><path d="M0 0v10l6-5z" fill="#c8c6c4" /></Svg>
    <div className="ml-[8px] flex w-[94px] items-center justify-center border-b-[5px] border-l border-b-[#117865] border-l-[#a19f9d] bg-white pt-[6px] text-[15px] font-semibold tracking-[-0.035em] text-[#252423]">Page 1</div>
    <div className="flex w-[50px] items-center justify-center bg-[#117865] pb-[4px]">
      <Svg w={14} h={14}><path d="M7 0v14M0 7h14" stroke="#fff" strokeWidth="3.600" /></Svg>
    </div>
  </div>
);

/* ---------- right panes ---------- */

const DoubleChevron = ({ flip = false }: { flip?: boolean }) => (
  <Svg w={16} h={16} className={flip ? 'rotate-180' : ''}><path d="M1 1l7 7-7 7M8 1l7 7-7 7" stroke="#333" strokeWidth="1.300" /></Svg>
);

const FiltersPane = () => (
  <div className="flex w-[41px] shrink-0 flex-col items-center border-l border-[#a8a8a8] bg-white pt-[16px]">
    <DoubleChevron flip />
    <Svg w={15} h={15} className="ml-[6px] mt-[20px]"><path d="M14 .8v13L7.500 9.500H1v-4h6.500z" stroke="#333" strokeWidth="1.500" /></Svg>
    <div className="ml-[2px] mt-[9px] text-[18.500px] font-semibold leading-5 tracking-[0.005em] text-[#252423] [writing-mode:vertical-rl]">Filters</div>
  </div>
);

const Well = ({ t }: { t: string }) => (
  <div className="flex h-[28px] shrink-0 items-center rounded-[2px] border border-[#bdbbb9] bg-[#edebe9] pl-[4px] pr-[4px]">
    <span className="flex-1">{t}</span>
    <Svg w={15} h={9} className="-mt-[1px]"><path d="M1 1l6.500 6.500L14 1" stroke="#444" strokeWidth="1.200" /></Svg>
    <Svg w={11} h={11} className="ml-[7px]"><path d="M.5.500l10 10M10.500.500l-10 10" stroke="#333" strokeWidth="1.200" /></Svg>
  </div>
);

const VizPane = () => (
  <div className="flex w-[226px] shrink-0 flex-col border-l border-[#e1dfdd] bg-[#f3f2f1] text-[14.700px] tracking-[-0.02em] text-[#252423]">
    <div className="flex h-[49px] items-center pl-[10px] pr-[10px]">
      <div className="flex-1 pt-[2px] text-[19.300px] font-semibold tracking-[-0.020em]">Visualizations</div>
      <DoubleChevron />
    </div>
    <div className="-mt-[1px] flex h-[20px] items-center pl-[10px] text-[14.700px] font-semibold tracking-[-0.025em]">Build visual</div>
    <div className="mt-[4px] flex h-[40px] items-center pl-[10px]">
      <div className="flex h-10 w-10 items-center justify-center rounded-[3px] bg-[#d2d0ce]">
        <Svg w={30} h={30}>
          <path d="M0 1h24" stroke="#333" strokeWidth="1.500" />
          <path d="M0.700 7.500h28.600v8H.7zM.7 21h28.600v8H.7z" fill="#117865" stroke="#d2d0ce" strokeWidth="1.400" />
          <path d="M0.700 7.500h28.600v8H.7zM.7 21h28.600v8H.7z" stroke="#333" strokeWidth="1.400" strokeDasharray="2.500 1.500" />
        </Svg>
      </div>
      <Svg w={28} h={30} className="ml-[51px]">
        <path d="M1 24V12h8v9M9 20V1.500h8V17M17 8h8v4" stroke="#444" strokeWidth="1.500" />
        <path d="M13 20q8-9 14-11-3 8-11 14z" fill="#f3f2f1" stroke="#333" strokeWidth="1.500" />
        <path d="M4 28q4-1 5-5 3-4 6-1 2 4-2 6-5 2-9 0z" fill="#f3f2f1" stroke="#333" strokeWidth="1.500" />
      </Svg>
      <Svg w={31} h={31} className="ml-[52px]">
        <circle cx="13" cy="13" r="12" stroke="#333" strokeWidth="1.500" />
        <path d="M2 14l6-3 4 2 11-7M8 16v7M12 17v8M16 15v9M20 13v7" stroke="#333" strokeWidth="1.600" /><path d="M22 21l8 9" stroke="#222" strokeWidth="3.200" />
      </Svg>
    </div>
    <Svg w={225} h={16}><path d="M0 15.500h20L30 6l10 9.500h185" stroke="#8a8886" strokeWidth="1.300" /></Svg>
    <div className="ml-[8px] mt-[8px] grid w-[210px] grid-cols-6">
      {gallery.map((g, i) => (
        <div key={i} className="flex h-[35px] w-[35px] items-center justify-center">
          <div className={`flex h-[30px] w-[30px] items-center justify-center ${i === 27 ? 'border border-[#222]' : ''}`}>
            <Svg className="overflow-visible">{g}</Svg>
          </div>
        </div>
      ))}
    </div>
    <div className="flex h-[40px] items-start border-b border-[#d8d6d4] pl-[16px] pt-[13px]">
      <Svg w={19} h={4}><path d="M0 1h2.500v2.500H0zM8 1h2.500v2.500H8zM16 1h2.500v2.500H16z" fill="#333" /></Svg>
    </div>
    <div className="ml-[15px] mt-[11px] h-[20px] leading-5">Columns</div>
    <div className="ml-[5px] mt-[7px] flex h-[76px] w-[214px] flex-col gap-[2px] rounded-[2px] border border-dashed border-[#b8b6b4] bg-white p-[4px]">
      <Well t="Sum of Open_Issues" />
      <Well t="UserStory" />
    </div>
    <div className="ml-[15px] mt-[11px] h-[22px] font-semibold leading-[22px] text-[#484644]">Drill through</div>
    <div className="ml-[15px] mt-[9px] flex h-[22px] w-[183px] items-center justify-between">
      Cross-report
      <div className="flex h-5 w-10 items-center rounded-full border border-[#8a8886] bg-white pl-[5px] text-[11.500px] text-[#605e5c]">
        <span className="mr-[2px] h-[10px] w-[10px] rounded-full bg-[#605e5c]" />Off
      </div>
    </div>
    <div className="ml-[15px] mt-[11px] flex h-[22px] w-[183px] items-center justify-between">
      Keep all filters
      <div className="mt-[2px] flex h-5 w-10 items-center rounded-full bg-[#117865] pl-[6px] text-[11.500px] text-white">
        On<span className="ml-[3px] h-[11px] w-[11px] rounded-full bg-white" />
      </div>
    </div>
    <div className="ml-[5px] mt-[13px] flex h-[32px] w-[214px] items-center justify-center whitespace-nowrap rounded-[2px] border border-dashed border-[#b8b6b4] bg-white text-[15px]">Add drill-through fields here</div>
  </div>
);

const fields: { t: string; table?: boolean; on?: boolean; sum?: boolean; used?: boolean }[] = [
  { t: 'open_issues_by_userst...', table: true, used: true },
  { t: 'Open_Issues', on: true, sum: true },
  { t: 'UserStory', on: true },
  { t: 'requirements_by_stak...', table: true },
  { t: 'Stakeholder' },
  { t: 'Total_Requirem...', sum: true },
  { t: 'status_by_project', table: true },
  { t: 'Project' },
  { t: 'status' },
  { t: 'Total', sum: true },
];

const DataPane = () => (
  <div className="flex flex-1 flex-col border-l border-[#e1dfdd] bg-[#f3f2f1] text-[14.600px] tracking-[-0.02em] text-[#252423]">
    <div className="flex h-[49px] items-center pl-[11px] pr-[8px]">
      <div className="flex-1 pt-[2px] text-[19px] font-semibold tracking-[-0.02em]">Data</div>
      <DoubleChevron />
    </div>
    <div className="ml-[5px] mt-[8px] flex h-[31px] w-[215px] items-center rounded-[4px] border border-[#d2d0ce] border-b-[#605e5c] bg-white pl-[14px] pt-[1px] text-[16.700px] text-[#605e5c]">
      <Svg w={19} h={19}><circle cx="8" cy="8" r="6.500" stroke="#555" strokeWidth="1.400" /><path d="M12.500 12.500l5 5" stroke="#555" strokeWidth="1.500" /></Svg>
      <span className="ml-[9px]">Search</span>
    </div>
    <div className="mt-[10px] flex flex-col">
      {fields.map((f) =>
        f.table ? (
          <div key={f.t} className="flex h-[30px] items-center whitespace-nowrap pl-[17px]">
            <Svg w={14} h={9} className="-mt-[2px]"><path d="M.5 1L7 7.500 13.500 1" stroke="#444" strokeWidth="1.100" /></Svg>
            <div className="relative ml-[5px]">
              <Svg w={16} h={16}><rect x="1" y="1" width="14" height="14" rx="2.500" stroke="#333" strokeWidth="1.400" /><path d="M5.500 1v14M10.500 1v14M1 5.500h14M1 10.500h14" stroke="#333" strokeWidth="1.300" /></Svg>
              {f.used && (
                <Svg w={15} h={15} className="absolute left-[8px] top-[8px]"><circle cx="7.500" cy="7.500" r="7.500" fill="#117865" /><path d="M4.500 7.500l2 2 4-4" stroke="#fff" strokeWidth="1.500" /></Svg>
              )}
            </div>
            <span className="ml-[7px]">{f.t}</span>
          </div>
        ) : (
          <div key={f.t} className="flex h-[30px] items-center whitespace-nowrap pl-[55px]">
            {f.on ? (
              <Svg w={15} h={15}><rect width="15" height="15" rx="2" fill="#117865" /><path d="M3 7.500l3.200 3.200L12.500 4.500" stroke="#fff" strokeWidth="1.400" /></Svg>
            ) : (
              <div className="h-[15px] w-[15px] rounded-[2px] border border-[#7a7977]" />
            )}
            <div className="ml-[11px] mr-[8px] w-[13px]">
              {f.sum && <Svg w={13} h={16}><path d="M12.500 1H1.200l6.300 7-6.300 7h11.300" stroke="#333" strokeWidth="1.500" /></Svg>}
            </div>
            <span>{f.t}</span>
          </div>
        ),
      )}
    </div>
  </div>
);

/* ---------- bottom bars ---------- */

const StatusBar = () => (
  <div className="flex h-[29px] items-center border-t border-[#dcdad8] bg-[#f3f2f1] pl-[5px] text-[15px] tracking-[-0.025em] text-[#484644]">
    <div className="flex-1 pt-[3px]">Page 1 of 1</div>
    <Svg w={153} h={16}><path d="M0 8h6" stroke="#555" strokeWidth="1.800" /><path d="M12 8.500h125M74.500 5v7" stroke="#605e5c" /><path d="M59 2h5v13h-5z" fill="#605e5c" /><path d="M148 3.500v9M143.500 8h9" stroke="#555" strokeWidth="1.800" /></Svg>
    <span className="ml-[17px] text-[15px] tracking-[-0.04em] text-[#605e5c]">82%</span>
    <Svg w={21} h={16} className="ml-[23px] mr-[20px]"><rect x="1" y="1" width="19" height="14" stroke="#6a6967" strokeWidth="1.700" /><path d="M7 4H4v3M7 12H4V9M14 4h3v3M14 12h3V9" stroke="#6a6967" strokeWidth="1.200" /></Svg>
  </div>
);

const Taskbar = () => (
  <div className="flex h-[51px] items-start border-t border-black bg-[linear-gradient(90deg,#202020_0%,#242424_28%,#2b2a28_40%,#2f2620_55%,#33241b_62%,#242220_72%,#1f1f1f_80%)] text-[15px] tracking-[-0.02em] text-white">
    <div className="flex w-[640px] pt-[7px]">
      <div className="relative ml-[24px] h-[40px] w-[40px]">
        <Svg w={32} h={24} className="mt-[9px]">
          <defs><linearGradient id="cl" x1="0" y1="0" x2="0" y2="1"><stop offset="0" stopColor="#7aa5ee" /><stop offset="1" stopColor="#d4e3fb" /></linearGradient></defs>
          <path d="M8 21q-7 0-7-6t6-7q2-7 10-7 7 1 8 7 6 1 6 7t-6 6z" fill="url(#cl)" />
          <path d="M8 21q-7 0-7-6t7-6 9 6q8-4 12 4-2 2-4 2z" fill="#c3d7f9" />
        </Svg>
        <div className="absolute left-[15px] top-[1px] flex h-5 w-5 items-center justify-center rounded-full bg-[#ff99a4] text-[13px] text-black">3</div>
      </div>
      <div className="flex flex-col text-[15px] leading-[20px] tracking-[-0.025em]">
        <span className="pt-[2px]">67°F</span>
        <span className="text-[#c8c8c8]">Cloudy</span>
      </div>
    </div>
    <Svg w={30} h={30} className="mt-[16px]">
      <defs><linearGradient id="win" x1="0" y1="0" x2="1" y2="1"><stop offset="0" stopColor="#7fe5fd" /><stop offset="1" stopColor="#0a9bf5" /></linearGradient></defs>
      <path d="M1 0h13v14H0V1q0-1 1-1zM15.500 0H28q1 0 1 1v13H15.500zM0 15.500h14v14H1q-1 0-1-1zM15.500 15.500H29v13q0 1-1 1H15.500z" fill="url(#win)" />
    </Svg>
    <div className="ml-[16px] mt-[10px] flex h-[40px] w-[275px] items-center rounded-full border border-[#5d5a57] bg-[linear-gradient(90deg,#484644,#4b4943_60%,#403b36)] text-[16px] tracking-[-0.02em] text-[#e4e4e4]">
      <Svg w={20} h={20} className="ml-[13px]"><circle cx="8.500" cy="8.500" r="7" stroke="#e8e8e8" strokeWidth="1.700" /><path d="M13.500 13.500l5.500 5.500" stroke="#e8e8e8" strokeWidth="2" /></Svg>
      <span className="ml-[12px] flex-1 pt-[2px]">Search</span>
      <Svg w={64} h={34} className="mr-[3px]">
        <defs><clipPath id="scene"><path d="M6 32Q0 26 1 19T8 9q4-7 14-6 7-4 15-1 8-2 13 4 9 3 11 12 1 8-6 14z" /></clipPath></defs>
        <g clipPath="url(#scene)">
          <path d="M0 0h64v34H0z" fill="#8cb9d6" />
          <path d="M4 12q6-5 16-1l-2 3H5zM34 8q6-3 10 1l-2 3h-7z" fill="#f1f5f7" />
          <path d="M0 20q10-6 20-2t22-2 22 0v18H0z" fill="#d98d80" />
          <path d="M0 26q14-8 30-5t34 0v13H0z" fill="#efb9a5" />
          <path d="M8 20l10-4 8 2-6 4zM42 19l10-3 6 2-12 4z" fill="#6fae45" />
          <path d="M45 4h11v15H45z" fill="#217c68" /><path d="M45 8h11M45 12h11M45 16h11" stroke="#58b7a0" />
          <path d="M27 20h5l-10 14H7zM32 20h4l21 14H31z" fill="#4b4a50" /><path d="M29 21L17 34M34 21l10 13" stroke="#f3f0e6" strokeDasharray="3 2" />
          <path d="M28.500 5h3.500v20h-3.500z" fill="#37a84c" />
        </g>
      </Svg>
    </div>
    <Svg w={30} h={30} className="ml-[15px] mt-[15px]"><rect y="9" width="22" height="20" rx="2" fill="#666" /><rect x="7" y="1" width="23" height="20" rx="2" fill="#f2f2f2" /><path d="M7 9h15v12H7z" fill="#b9b9b9" /></Svg>
    <Svg w={31} h={31} className="ml-[25px] mt-[14px]">
      <defs><linearGradient id="ed" x1="0" y1="0" x2="1" y2=".6"><stop offset="0" stopColor="#1b93d8" /><stop offset=".5" stopColor="#2fc2df" /><stop offset="1" stopColor="#66e063" /></linearGradient></defs>
      <circle cx="15.500" cy="15.500" r="15" fill="#1367b5" />
      <path d="M.5 15Q2 .5 15.500.500q14 0 15 13.500 0 8-9 8-5 0-4-3 2-2 1-5-2-6-9-5Q3 10 .5 15z" fill="url(#ed)" />
      <path d="M17.500 19q-1 3 4 4 5 0 8-2-3 8-11 10-6-8-1-12z" fill="#2e2620" />
      <path d="M18 25q6 3 10 0-3 5-9 6z" fill="#1583d8" />
      <circle cx="8" cy="24" r="7" fill="#b9b4ae" /><circle cx="8" cy="22" r="2.700" fill="#fff" /><path d="M3 29q5-6 10 0-5 4-10 0z" fill="#fff" />
    </Svg>
    <Svg w={30} h={29} className="ml-[24px] mt-[16px]"><path d="M0 2q0-2 2-2h8l4 4h14v8H0z" fill="#e0a010" /><path d="M0 6h28q2 0 2 2v18q0 2-2 2H2q-2 0-2-2z" fill="#ffd24d" /><path d="M5 22q0-3 3-3h14q3 0 3 3v6H5z" fill="#0c72c8" /><path d="M9 23h12" stroke="#0a4f94" strokeWidth="1.300" /></Svg>
    <Svg w={30} h={30} className="ml-[25px] mt-[15px]"><rect x=".5" y=".5" width="29" height="29" rx="3" fill="#1e5583" stroke="#5f95bd" /><path d="M5 4q9 0 13 8 5 4 5 9l4 4-5-1-3 2-2-5q-3 2-5-1-1 3-3 1-2-6-2-9-3-4-2-8z" stroke="#e4eef5" strokeWidth="1.200" /><path d="M20 3l6 5" stroke="#fff" strokeWidth="2" /></Svg>
    <div className="ml-[15px] mt-[5px] flex h-[45px] w-[50px] justify-center rounded-t-[5px] border border-b-0 border-[#48403a] bg-[#3d332c] pt-[9px]">
      <Svg w={24} h={30}><path d="M13 0h11v30H13z" fill="#d8920f" /><path d="M7 8h10v22H7z" fill="#efb71e" /><path d="M0 16h10v14H0z" fill="#fbe070" /></Svg>
    </div>
    <Svg w={22} h={9} className="ml-[15px] mt-[42px]"><path d="M0 2q0-2 2-2h18q2 0 2 2v7H0z" fill="#f3f3f3" /><path d="M3 4h3v4H3zM8 4h3v4H8zM13 4h3v4h-3z" fill="#d83b01" /></Svg>
    <div className="flex flex-1 justify-end">
      <Svg w={14} h={9} className="mt-[27px]"><path d="M1 7.500L7 1.500l6 6" stroke="#fff" strokeWidth="1.900" /></Svg>
      <Svg w={21} h={18} className="ml-[23px] mt-[23px]"><path d="M5 14q-5 0-5-4.500T4.500 6Q6 1 10.500 1t6 5q3 1 3 5t-4 3z" fill="#a8a8a8" /><path d="M5 14q-5 0-5-4.500T5 6q4 0 6 4v4z" fill="#ececec" /><circle cx="14.500" cy="12" r="5.700" fill="#5bc2f5" /><path d="M14.500 11v4.500M14.500 8.500V10" stroke="#134" strokeWidth="1.500" /></Svg>
      <Svg w={20} h={16} className="ml-[19px] mt-[22px]"><path d="M1 6q9-9 18 0M4 9q6-6 12 0M6.500 12q3.500-4 7 0" stroke="#fff" strokeWidth="1.600" /><circle cx="10" cy="13.500" r="1.800" fill="#fff" /></Svg>
      <Svg w={21} h={17} className="ml-[9px] mt-[22px]"><path d="M1 6h3l5-4.500v14L4 11H1zM12 5q2 3.500 0 7M14.500 3q4 5.500 0 11M17 1q5 7.500 0 15" stroke="#fff" strokeWidth="1.400" /></Svg>
      <Svg w={21} h={17} className="ml-[9px] mt-[20px]"><path d="M8 4h8q2 0 2 2v7q0 2-2 2H3q-2 0-2-2v-2" stroke="#fff" strokeWidth="1.600" /><path d="M19 7.500h2v4h-2zM8 6h2v7H4v-1z" fill="#fff" /><path d="M5 0L0 8h3l-1 5 6-7H5l2-5z" fill="#fff" /></Svg>
      <div className="ml-[20px] mr-[22px] w-[70px] whitespace-nowrap pt-[9px] text-right text-[14.800px] leading-5">
        <div className="flex justify-end">10:00 PM</div>
        <div className="flex justify-end">5/25/2025</div>
      </div>
    </div>
  </div>
);

export default function App() {
  return (
    <div className="flex h-[1061px] w-[1918px] flex-col overflow-hidden bg-white font-['Open_Sans',sans-serif]">
      <TitleBar />
      <div className="relative z-10 h-[157px] shrink-0 bg-[#fafafa] shadow-[0_1px_6px_rgba(0,0,0,0.25)]">
        <TabRow />
        <Ribbon />
      </div>
      <div className="flex h-[790px] shrink-0">
        <NavRail />
        <div className="flex w-[1417px] shrink-0 flex-col">
          <div className="flex h-[746px]">
            <div className="relative flex-1 bg-white">
              <Dots />
              <StakeholderChart />
              <StatusChart />
              <TableVisual />
            </div>
            <FiltersPane />
          </div>
          <PageTabs />
        </div>
        <VizPane />
        <DataPane />
      </div>
      <StatusBar />
      <Taskbar />
    </div>
  );
}
